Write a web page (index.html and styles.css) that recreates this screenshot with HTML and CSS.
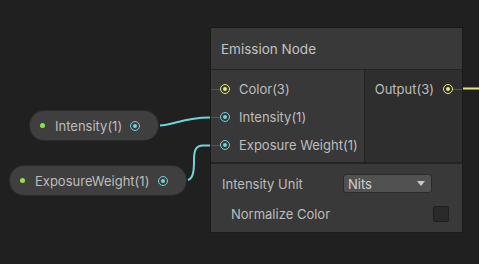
FILE: index.html
```html
<!DOCTYPE html>
<html>
	<head>
		<meta charset="utf-8">
		<title>Emission Node</title>
		<link rel="stylesheet" href="styles.css">
	</head>
	<body>
		<div class="graph">
			<!-- wires -->
			<svg class="wires" width="479" height="264" viewBox="0 0 479 264">
				<defs>
					<linearGradient id="colorWire" x1="0" y1="0" x2="1" y2="0">
						<stop offset="0" stop-color="#e8a6e0"/>
						<stop offset="0.5" stop-color="#eadcb0"/>
						<stop offset="1" stop-color="#e4ea82"/>
					</linearGradient>
				</defs>
				<path d="M0 88.5 H211" stroke="url(#colorWire)" stroke-width="2" fill="none"/>
				<path d="M462 88.5 H479" stroke="#e4ea82" stroke-width="2" fill="none"/>
				<path d="M160 125.5 C172 125.5 186 117 211 117.5" stroke="#6fd5dd" stroke-width="2" fill="none"/>
				<path d="M188 180 C194 178 194 168 194 160 C194 150 196 145.5 203 145.5 H211" stroke="#6fd5dd" stroke-width="2" fill="none"/>
			</svg>

			<div class="prop prop-intensity">
				<span class="dot"></span>
				<span class="prop-name">Intensity(1)</span>
				<span class="port port-cyan"></span>
			</div>
			<div class="prop prop-exposure">
				<span class="dot"></span>
				<span class="prop-name">ExposureWeight(1)</span>
				<span class="port port-cyan"></span>
			</div>

			<div class="node">
				<div class="node-title">Emission Node</div>
				<div class="node-ports">
					<div class="inputs">
						<div class="slot"><span class="stub"></span><span class="port port-yellow"></span>Color(3)</div>
						<div class="slot"><span class="stub"></span><span class="port port-cyan"></span>Intensity(1)</div>
						<div class="slot"><span class="stub"></span><span class="port port-cyan"></span>Exposure Weight(1)</div>
					</div>
					<div class="outputs">
						<div class="slot out">Output(3)<span class="port port-yellow"></span><span class="stub"></span></div>
					</div>
				</div>
				<div class="node-extra">
					<div class="field">
						<span class="field-label">Intensity Unit</span>
						<div class="dropdown">Nits<span class="arrow"></span></div>
					</div>
					<div class="field field-check">
						<span class="field-label">Normalize Color</span>
						<span class="checkbox"></span>
					</div>
				</div>
			</div>
		</div>
	</body>
</html>
```
FILE: styles.css
```css
body{
	margin: 0;
	background: #202020;
	font-family: Inter, "Noto Sans", sans-serif;
	font-size: 13px;
	color: #bdbdbd;
}
.graph{
	position: relative;
	width: 479px;
	height: 264px;
	overflow: hidden;
}
.wires{
	position: absolute;
	left: 0;
	top: 0;
}

/* property nodes */
.prop{
	position: absolute;
	height: 29px;
	display: flex;
	align-items: center;
	background: #3f3f3f;
	border-radius: 14px;
	box-shadow: 0 0 0 1px #2a2a2a;
	box-sizing: border-box;
	padding: 0 0 0 10px;
}
.prop-intensity{
	left: 30px;
	top: 111px;
	width: 128px;
}
.prop-exposure{
	left: 10px;
	top: 166px;
	width: 176px;
}
.dot{
	width: 5px;
	height: 5px;
	border-radius: 50%;
	background: #8fe34a;
	margin-right: 10px;
}
.prop-name{
	flex: 1;
	color: #bcbcbc;
}
.prop .port{
	margin-right: 18px;
}

/* ports */
.port{
	width: 10px;
	height: 10px;
	border-radius: 50%;
	box-sizing: border-box;
	border: 1.5px solid;
	display: inline-flex;
	align-items: center;
	justify-content: center;
	flex: none;
}
.port::after{
	content: "";
	width: 4px;
	height: 4px;
	border-radius: 50%;
	background: currentColor;
}
.port-yellow{ color: #e6ea7c; }
.port-cyan{ color: #70d3dc; }

/* main node */
.node{
	position: absolute;
	left: 211px;
	top: 28px;
	width: 251px;
	background: #242424;
	display: flex;
	flex-direction: column;
	gap: 1px;
	box-shadow: 0 0 0 1px #1a1a1a;
}
.node-title{
	height: 41px;
	background: #393939;
	display: flex;
	align-items: center;
	padding-left: 10px;
	font-size: 13.5px;
	color: #c2c2c2;
}
.node-ports{
	display: flex;
	gap: 1px;
	height: 92px;
	margin-bottom: 1px;
}
.inputs{
	width: 154px;
	background: #383838;
	padding-top: 9px;
	display: flex;
	flex-direction: column;
	gap: 8px;
}
.outputs{
	flex: 1;
	background: #2e2e2e;
	padding-top: 9px;
}
.slot{
	height: 20px;
	display: flex;
	align-items: center;
}
.slot .stub{
	width: 9px;
	height: 1px;
	background: #55554c;
}
.inputs .slot .port{
	margin-right: 9px;
}
.slot.out{
	padding-left: 10px;
}
.slot.out .port{
	margin-left: 9px;
}
.slot.out .stub{
	flex: 1;
}

.node-extra{
	height: 68px;
	box-sizing: border-box;
	background: #393939;
	padding: 10px 13px 0 11px;
	display: flex;
	flex-direction: column;
	gap: 11px;
}
.field{
	display: flex;
	align-items: center;
	height: 19px;
}
.field-label{
	width: 121px;
}
.dropdown{
	width: 89px;
	height: 19px;
	box-sizing: border-box;
	background: #515151;
	border: 1px solid #2b2b2b;
	border-radius: 3px;
	padding: 0 6px 0 4px;
	display: flex;
	align-items: center;
	justify-content: space-between;
	color: #d0d0d0;
}
.arrow{
	width: 0;
	height: 0;
	border-left: 4px solid transparent;
	border-right: 4px solid transparent;
	border-top: 5px solid #c8c8c8;
}
.field-check{
	padding-left: 9px;
	justify-content: space-between;
}
.checkbox{
	width: 16px;
	height: 16px;
	box-sizing: border-box;
	background: #2a2a2a;
	border: 1px solid #1f1f1f;
	border-radius: 2px;
}
```
